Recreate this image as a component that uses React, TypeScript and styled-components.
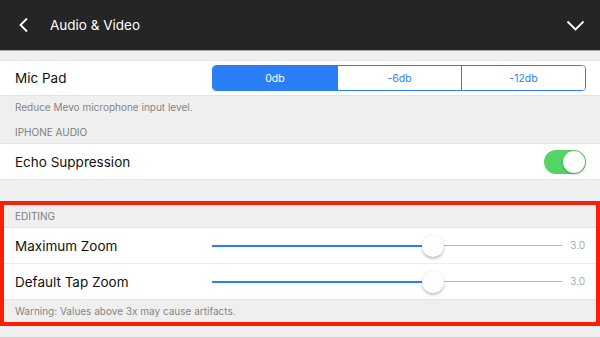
import React from "react";
import styled, {createGlobalStyle} from "styled-components";

const GlobalStyle = createGlobalStyle`
  body {
    margin: 0;
    background: #efeff0;
    font-family: Inter, "Liberation Sans", sans-serif;
    color: #111;
    overflow: hidden;
  }
`

const Page = styled.div`
  width: 600px;
  background: #efeff0;
`

const Header = styled.div`
  height: 50px;
  background: #252525;
  border-bottom: 1px solid #a8a8a8;
  display: flex;
  align-items: center;
  padding: 0 15px 0 18px;
  color: #fff;
`

const Title = styled.div`
  font-size: 13.5px;
  margin-left: 20px;
  flex: 1;
`

const Group = styled.div<{$top: number}>`
  padding-top: ${p => p.$top}px;
`

const Highlight = styled.div`
  position: relative;
  margin-top: 21px;

  &::after {
    content: "";
    position: absolute;
    inset: 0;
    border: 4px solid #fb1e06;
    pointer-events: none;
  }
`

const SectionTitle = styled.div<{$h: number}>`
  height: ${p => p.$h}px;
  box-sizing: border-box;
  display: flex;
  align-items: flex-end;
  padding: 0 15px 5px;
  font-size: 10px;
  color: #7d7d7d;
  text-transform: uppercase;
`

const Footer = styled.div<{$h: number}>`
  height: ${p => p.$h}px;
  box-sizing: border-box;
  padding: 5px 15px 0;
  font-size: 10px;
  color: #858585;
`

const Row = styled.div<{$h?: number}>`
  height: ${p => p.$h ?? 35}px;
  box-sizing: border-box;
  background: #fff;
  border-top: 1px solid #e3e3e3;
  display: grid;
  grid-template-columns: 197px 1fr;
  align-items: center;
  padding: 0 14px 0 15px;

  &:last-child {
    border-bottom: 1px solid #e3e3e3;
  }

  & + & {
    border-top: 1px solid #ececec;
  }
`

const Label = styled.div`
  font-size: 13.5px;
`

const Segments = styled.div`
  display: grid;
  grid-template-columns: repeat(3, 1fr);
  height: 24px;
  border: 1px solid #2a7ff6;
  border-radius: 4px;
  overflow: hidden;
`

const Segment = styled.div<{$active?: boolean}>`
  display: flex;
  align-items: center;
  justify-content: center;
  font-size: 10.5px;
  color: ${p => p.$active ? "#fff" : "#2a7ff6"};
  background: ${p => p.$active ? "#2a7ff6" : "#fff"};

  & + & {
    border-left: 1px solid #2a7ff6;
  }
`

const Switch = styled.div`
  justify-self: end;
  width: 42px;
  height: 24px;
  border-radius: 12px;
  background: #55d466;
  display: flex;
  justify-content: flex-end;
  padding: 1px;
  box-sizing: border-box;
`

const Knob = styled.div`
  width: 22px;
  height: 22px;
  border-radius: 50%;
  background: #fff;
  box-shadow: 0 1px 3px rgba(0, 0, 0, 0.3);
`

const SliderWrap = styled.div`
  display: flex;
  align-items: center;
`

const Track = styled.div`
  position: relative;
  flex: 1;
  height: 24px;
`

const Fill = styled.div`
  position: absolute;
  left: 0;
  top: 11px;
  height: 2px;
  background: #2a7ff6;
`

const Rest = styled.div`
  position: absolute;
  right: 0;
  top: 11px;
  height: 1.5px;
  background: #b6b6b6;
`

const Thumb = styled.div`
  position: absolute;
  top: 1px;
  width: 22px;
  height: 22px;
  margin-left: -11px;
  border-radius: 50%;
  background: #fff;
  box-shadow: 0 2px 3px rgba(0, 0, 0, 0.22), 0 0 1px rgba(0, 0, 0, 0.15);
`

const Value = styled.div`
  width: 16px;
  margin-left: 8px;
  font-size: 10.5px;
  color: #9b9b9b;
  font-weight: 300;
`

const Bottom = styled.div`
  margin-top: 11px;
  height: 0;
  border-top: 1px solid #cfcfcf;
`

function Slider({value}: {value: number}) {
    const pct = `${value * 100}%`
    return <SliderWrap>
        <Track>
            <Fill style={{width: pct}}/>
            <Rest style={{left: pct}}/>
            <Thumb style={{left: pct}}/>
        </Track>
        <Value>3.0</Value>
    </SliderWrap>
}

export default function App() {
    return <Page>
        <GlobalStyle/>
        <Header>
            <svg width="12" height="16" viewBox="0 0 12 16">
                <path d="M9 1.5 L2.5 8 L9 14.5" fill="none" stroke="#fff" strokeWidth="1.8"/>
            </svg>
            <Title>Audio &amp; Video</Title>
            <svg width="19" height="11" viewBox="0 0 19 11">
                <path d="M1.5 1.5 L9.5 9.5 L17.5 1.5" fill="none" stroke="#fff" strokeWidth="1.8"/>
            </svg>
        </Header>

        <Group $top={9}>
            <Row $h={36}>
                <Label>Mic Pad</Label>
                <Segments>
                    <Segment $active>0db</Segment>
                    <Segment>-6db</Segment>
                    <Segment>-12db</Segment>
                </Segments>
            </Row>
        </Group>
        <Footer $h={24}>Reduce Mevo microphone input level.</Footer>

        <SectionTitle $h={23}>iPhone Audio</SectionTitle>
        <Group $top={0}>
            <Row $h={37}>
                <Label>Echo Suppression</Label>
                <Switch><Knob/></Switch>
            </Row>
        </Group>

        <Highlight>
            <SectionTitle $h={26}>Editing</SectionTitle>
            <Group $top={0}>
                <Row $h={36}>
                    <Label>Maximum Zoom</Label>
                    <Slider value={0.63}/>
                </Row>
                <Row $h={37}>
                    <Label>Default Tap Zoom</Label>
                    <Slider value={0.63}/>
                </Row>
            </Group>
            <Footer $h={26}>Warning: Values above 3x may cause artifacts.</Footer>
        </Highlight>
        <Bottom/>
    </Page>
}
